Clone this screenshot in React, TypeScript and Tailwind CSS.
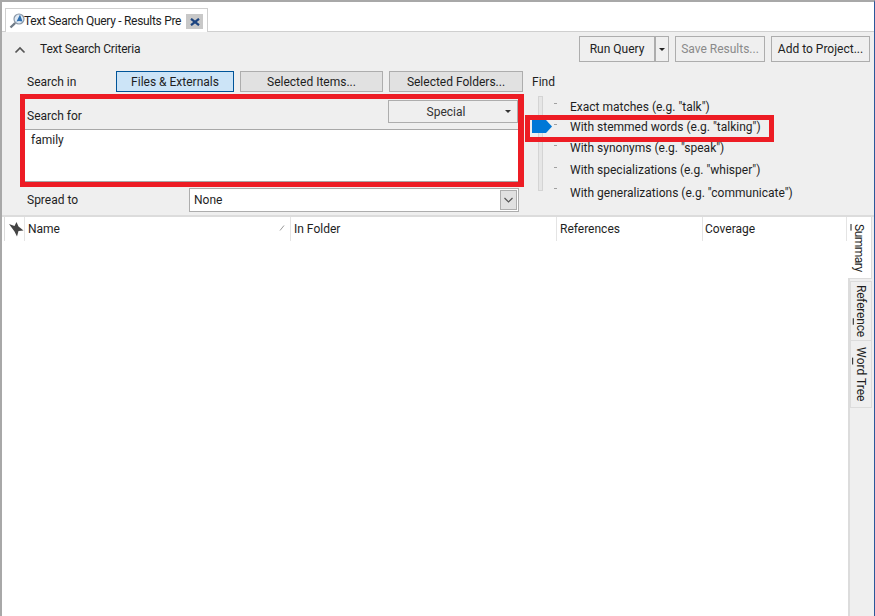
export default function App() {
  const finds = [
    { t: 'Exact matches (e.g. "talk")', h: 'h-[21px]', pt: 'pt-[2px]' },
    { t: 'With stemmed words (e.g. "talking")', h: 'h-[21px]', pt: 'pt-0', sel: true },
    { t: 'With synonyms (e.g. "speak")', h: 'h-[22px]', pt: 'pt-0' },
    { t: 'With specializations (e.g. "whisper")', h: 'h-[21px]', pt: 'pt-0' },
    { t: 'With generalizations (e.g. "communicate")', h: 'h-[23px]', pt: 'pt-[2px]' },
  ];
  const btn = 'h-full flex items-center justify-center border border-[#adadad] text-[#222]';
  return (
    <div className="w-[875px] h-[616px] overflow-hidden bg-white flex flex-col border-t-2 border-t-[#a8a8a8] border-l-2 border-l-[#a8a8a8] border-r border-r-[#2b579a] text-[12px] leading-[16px] text-[#1e1e1e]" style={{ fontFamily: 'Roboto, "Noto Sans", sans-serif' }}>
      {/* tab strip */}
      <div className="h-[30px] shrink-0 pl-[3px] pt-[6px] border-b border-[#cfcfcf] bg-white flex">
        <div className="w-[203px] h-[24px] bg-white border border-b-0 border-[#cfcfcf] flex items-center relative">
          <svg width="16" height="16" viewBox="0 0 16 16" className="ml-[3px] -mr-[1px] shrink-0">
            <circle cx="10" cy="6" r="5" fill="#dfeaf5" stroke="#8a97a6" strokeWidth="1.2" />
            <path d="M6.2 10 L1.5 14.5" stroke="#6f7a86" strokeWidth="2.4" />
            <path d="M11 1.5 L7.5 8.5 L10 8 L13.5 8.5 Z" fill="#2f6fb0" />
          </svg>
          <span className="whitespace-nowrap w-[159px] tracking-[-0.3px]">Text Search Query - Results Pre</span>
          <div className="w-[17px] h-[15px] bg-[#c8c8c8] flex items-center justify-center ml-[3px] mt-[2px]">
            <svg width="10" height="8" viewBox="0 0 10 8"><path d="M1 0.8 L9 7.2 M9 0.8 L1 7.2" stroke="#1c4480" strokeWidth="2.2" /></svg>
          </div>
        </div>
      </div>
      {/* criteria */}
      <div className="h-[185px] shrink-0 bg-[#efefef] border-b-2 border-[#dcdcdc] flex flex-col">
        <div className="h-[29px] mt-[3px] flex items-start">
          <svg width="12" height="8" viewBox="0 0 12 8" className="ml-[12px] mt-[11px]"><path d="M1.5 6.5 L6 2 L10.5 6.5" fill="none" stroke="#555" strokeWidth="1.7" /></svg>
          <span className="ml-[14px] mt-[6px] tracking-[-0.2px]">Text Search Criteria</span>
          <div className="ml-auto mr-[4px] h-[26px] flex mt-[1px]">
            <div className={btn + ' w-[77px] border-r-2'}>Run Query</div>
            <div className="w-[13px] h-full border border-l-0 border-[#adadad] flex items-center justify-center">
              <div className="w-0 h-0 border-l-[3px] border-r-[3px] border-t-[3px] border-l-transparent border-r-transparent border-t-[#222]" />
            </div>
            <div className="w-[90px] ml-[6px] h-full flex items-center justify-center border border-[#adadad] text-[#8a8a8a]">Save Results...</div>
            <div className={btn + ' w-[99px] ml-[6px]'}>Add to Project...</div>
          </div>
        </div>
        <div className="flex flex-1 min-h-0">
          <div className="w-[530px] shrink-0 flex flex-col pl-[18px] pt-[7px]">
            <div className="h-[21px] flex items-center pl-[7px] shrink-0">
              <span className="w-[89px]">Search in</span>
              <div className="w-[118px] h-full flex items-center justify-center border border-[#005499] bg-[#cce4f7]">Files &amp; Externals</div>
              <div className="w-[143px] h-full ml-[6px] flex items-center justify-center border border-[#adadad] bg-[#e1e1e1]">Selected Items...</div>
              <div className="w-[134px] h-full ml-[6px] flex items-center justify-center border border-[#adadad] bg-[#e1e1e1]">Selected Folders...</div>
            </div>
            <div className="w-[504px] h-[93px] mt-[2px] border-[5px] border-r-[6px] border-[#ed1c24] flex flex-col shrink-0">
              <div className="h-[30px] shrink-0 flex items-end pb-[5px] pl-[2px] relative">
                <span>Search for</span>
                <div className="absolute right-0 top-[1px] w-[130px] h-[23px] border border-[#adadad] flex items-center justify-center pr-[14px] text-[#333]">
                  Special
                  <div className="absolute right-[6px] top-[9px] w-0 h-0 border-l-[3px] border-r-[3px] border-t-[3px] border-l-transparent border-r-transparent border-t-[#333]" />
                </div>
              </div>
              <div className="flex-1 bg-white border-t border-b border-[#a8a8a8] pl-[6px] pt-[2px]">family</div>
            </div>
            <div className="h-[24px] mt-[1px] flex items-center pl-[7px] shrink-0">
              <span className="w-[162px]">Spread to</span>
              <div className="w-[330px] h-full bg-white border border-[#adadad] flex items-center pl-[4px] relative">
                None
                <div className="absolute right-[1px] top-[1px] w-[17px] h-[20px] bg-[#e1e1e1] border border-[#adadad] flex items-center justify-center">
                  <svg width="9" height="6" viewBox="0 0 9 6"><path d="M0.5 1 L4.5 5 L8.5 1" fill="none" stroke="#555" strokeWidth="1.2" /></svg>
                </div>
              </div>
            </div>
          </div>
          <div className="flex-1 relative">
            <div className="h-[20px] flex items-center mt-[7px] pt-px">Find</div>
            <div className="relative mt-[5px] ml-[6px] w-[5px] h-[95px] bg-[#e6e6e6] border border-[#d4d4d4] -mb-[96px]" />
            <div className="flex flex-col">
              {finds.map((f) => (
                <div key={f.t} className={'relative flex items-center whitespace-nowrap pl-[38px] ' + f.h + ' ' + f.pt}>
                  <div className="absolute left-[22px] top-[8px] w-[3px] h-px bg-[#a0a0a0]" />
                  {f.sel && (
                    <>
                      <div className="absolute left-[-7px] top-[-1px] w-[249px] h-[27px] border-[5px] border-[#ed1c24]" />
                      <svg width="20" height="13" viewBox="0 0 20 13" className="absolute left-0 top-[4px]"><path d="M0 0 H14 L20 6.5 L14 13 H0 Z" fill="#0078d7" /></svg>
                    </>
                  )}
                  <span className="relative">{f.t}</span>
                </div>
              ))}
            </div>
          </div>
        </div>
      </div>
      {/* results */}
      <div className="flex-1 min-h-0 flex">
        <div className="flex-1 pl-[2px] min-w-0">
          <div className="h-[24px] flex items-center border-l border-[#dcdcdc]">
            <div className="w-[20px] h-full border-r border-[#e4e4e4] flex items-center justify-center pl-[2px]">
              <svg width="16" height="16" viewBox="0 0 16 16"><path d="M8.5 1 L10.5 5.5 L15.5 9.5 L10.5 10 L9 15.5 L6.5 10.5 L1 3 L6.5 5 Z" fill="#444" /></svg>
            </div>
            <div className="w-[266px] h-full border-r border-[#e4e4e4] flex items-center pl-[3px] relative">
              Name
              <svg width="6" height="6" viewBox="0 0 6 6" className="absolute right-[5px] top-[8px]"><path d="M1 5.5 L5 0.5" stroke="#999" /></svg>
            </div>
            <div className="w-[266px] h-full border-r border-[#e4e4e4] flex items-center pl-[3px]">In Folder</div>
            <div className="w-[146px] h-full border-r border-[#e4e4e4] flex items-center pl-[3px]">References</div>
            <div className="w-[144px] h-full border-r border-[#e4e4e4] flex items-center pl-[2px]">Coverage</div>
          </div>
        </div>
        <div className="w-[26px] shrink-0 flex flex-col bg-[#efefef] border-l-2 border-[#dcdcdc] relative">
          <div className="h-[62px] w-[24px] -ml-[2px] shrink-0 bg-white border-r border-b border-[#dcdcdc] flex items-center justify-center pr-[2px]">
            <span className="tracking-[-0.5px]" style={{ writingMode: 'vertical-rl' }}><u>S</u>ummary</span>
          </div>
          <div className="h-[60px] mt-[2px] shrink-0 w-[22px] border border-[#dcdcdc] flex items-center justify-center pr-[1px]">
            <span className="tracking-[-0.2px]" style={{ writingMode: 'vertical-rl' }}>Refere<u>n</u>ce</span>
          </div>
          <div className="h-[67px] shrink-0 w-[22px] border border-t-0 border-[#dcdcdc] flex items-center justify-center pr-[1px]">
            <span style={{ writingMode: 'vertical-rl' }}>W<u>o</u>rd Tree</span>
          </div>
        </div>
      </div>
    </div>
  );
}
